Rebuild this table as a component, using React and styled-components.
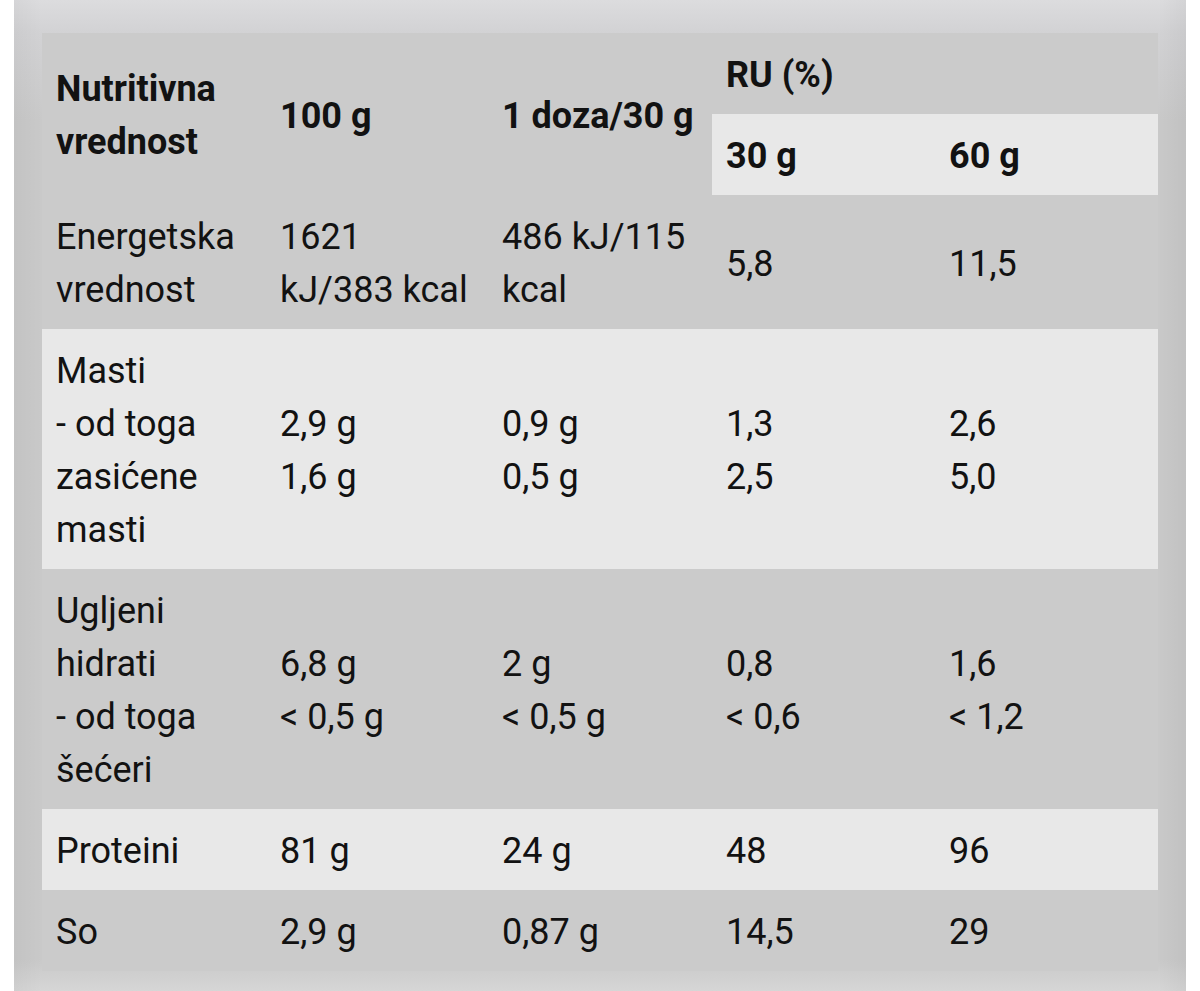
import React from 'react';
import styled, { createGlobalStyle } from 'styled-components';

const GlobalStyle = createGlobalStyle`
  html, body {
    margin: 0;
    padding: 0;
    background: #ffffff;
  }
  body {
    font-family: Roboto, "Liberation Sans", Arial, sans-serif;
  }
`;

const Frame = styled.div`
  margin: 0 14px;
  height: 991px;
  box-sizing: border-box;
  padding: 33px 28px 0 28px;
  background:
    linear-gradient(to right, rgba(0, 0, 0, 0.03), rgba(0, 0, 0, 0) 28px, rgba(0, 0, 0, 0) calc(100% - 28px), rgba(0, 0, 0, 0.04)),
    linear-gradient(to bottom, #dcdcde 0, #d2d2d4 33px, #c9c9c9 120px, #c9c9c9 960px, #d6d6d6 100%);
`;

const Table = styled.table`
  width: 1116px;
  border-collapse: collapse;
  table-layout: fixed;
  color: #121212;
  font-size: 36px;
  line-height: 53px;
`;

const Row = styled.tr`
  background: ${(p) => (p.$light ? '#e8e8e8' : '#cbcbcb')};
`;

const HeadCell = styled.th`
  text-align: left;
  font-weight: 700;
  vertical-align: middle;
  padding: 16px 15px 12px 14px;
  white-space: nowrap;
  background: ${(p) => (p.$light ? '#e8e8e8' : 'transparent')};
`;

const Cell = styled.td`
  text-align: left;
  font-weight: 400;
  vertical-align: middle;
  padding: 16px 15px 12px 14px;
  white-space: nowrap;
`;

const rows = [
  {
    light: false,
    cells: [
      ['Energetska', 'vrednost'],
      ['1621', 'kJ/383 kcal'],
      ['486 kJ/115', 'kcal'],
      ['5,8'],
      ['11,5'],
    ],
  },
  {
    light: true,
    cells: [
      ['Masti', '- od toga', 'zasićene', 'masti'],
      ['2,9 g', '1,6 g'],
      ['0,9 g', '0,5 g'],
      ['1,3', '2,5'],
      ['2,6', '5,0'],
    ],
  },
  {
    light: false,
    cells: [
      ['Ugljeni', 'hidrati', '- od toga', 'šećeri'],
      ['6,8 g', '< 0,5 g'],
      ['2 g', '< 0,5 g'],
      ['0,8', '< 0,6'],
      ['1,6', '< 1,2'],
    ],
  },
  {
    light: true,
    cells: [['Proteini'], ['81 g'], ['24 g'], ['48'], ['96']],
  },
  {
    light: false,
    cells: [['So'], ['2,9 g'], ['0,87 g'], ['14,5'], ['29']],
  },
];

const Lines = ({ lines }) =>
  lines.map((line, i) => (
    <React.Fragment key={i}>
      {i > 0 && <br />}
      {line}
    </React.Fragment>
  ));

export default function App() {
  return (
    <>
      <GlobalStyle />
      <Frame>
        <Table>
          <colgroup>
            <col style={{ width: '224px' }} />
            <col style={{ width: '222px' }} />
            <col style={{ width: '224px' }} />
            <col style={{ width: '223px' }} />
            <col style={{ width: '223px' }} />
          </colgroup>
          <thead>
            <Row>
              <HeadCell rowSpan={2}>
                Nutritivna
                <br />
                vrednost
              </HeadCell>
              <HeadCell rowSpan={2}>100 g</HeadCell>
              <HeadCell rowSpan={2}>1 doza/30 g</HeadCell>
              <HeadCell colSpan={2}>RU (%)</HeadCell>
            </Row>
            <Row>
              <HeadCell $light>30 g</HeadCell>
              <HeadCell $light>60 g</HeadCell>
            </Row>
          </thead>
          <tbody>
            {rows.map((row, r) => (
              <Row key={r} $light={row.light}>
                {row.cells.map((lines, c) => (
                  <Cell key={c}>
                    <Lines lines={lines} />
                  </Cell>
                ))}
              </Row>
            ))}
          </tbody>
        </Table>
      </Frame>
    </>
  );
}
